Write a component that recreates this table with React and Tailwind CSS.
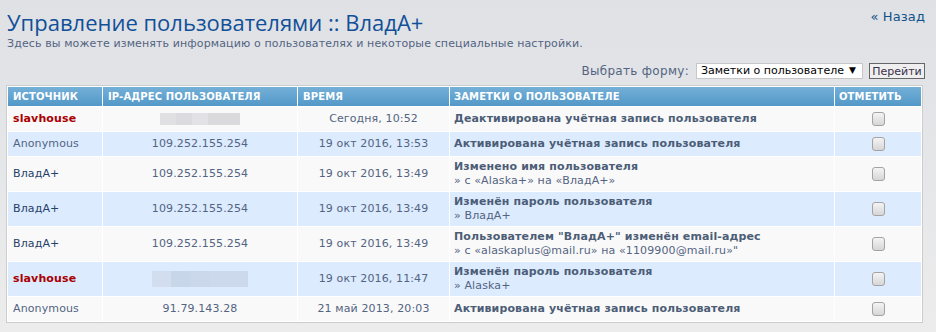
import React from "react";

const rows = [
  { src: "slavhouse", kind: "red", ip: null, blur: "row1", time: "Сегодня, 10:52", note: "Деактивирована учётная запись пользователя", alt: false },
  { src: "Anonymous", kind: "anon", ip: "109.252.155.254", time: "19 окт 2016, 13:53", note: "Активирована учётная запись пользователя", alt: true },
  { src: "ВладА+", kind: "user", ip: "109.252.155.254", time: "19 окт 2016, 13:49", note: "Изменено имя пользователя", sub: "» с «Alaska+» на «ВладА+»", alt: false },
  { src: "ВладА+", kind: "user", ip: "109.252.155.254", time: "19 окт 2016, 13:49", note: "Изменён пароль пользователя", sub: "» ВладА+", alt: true },
  { src: "ВладА+", kind: "user", ip: "109.252.155.254", time: "19 окт 2016, 13:49", note: "Пользователем \"ВладА+\" изменён email-адрес", sub: "» с «alaskaplus@mail.ru» на «1109900@mail.ru»\"", alt: false },
  { src: "slavhouse", kind: "red", ip: null, blur: "row6", time: "19 окт 2016, 11:47", note: "Изменён пароль пользователя", sub: "» Alaska+", alt: true },
  { src: "Anonymous", kind: "anon", ip: "91.79.143.28", time: "21 май 2013, 20:03", note: "Активирована учётная запись пользователя", alt: false },
];

function Checkbox() {
  return (
    <span className="inline-block h-[14px] w-[13px] rounded-[3px] border border-[#a3a3a3] bg-gradient-to-b from-[#f4f4f4] to-[#d6d6d6] align-middle" />
  );
}

function Source({ row }) {
  if (row.kind === "red") return <span className="font-bold text-[#aa0000]">{row.src}</span>;
  if (row.kind === "user") return <span className="text-[#26416a]">{row.src}</span>;
  return <span className="text-[#536482]">{row.src}</span>;
}

function Blur({ which }) {
  if (which === "row1") {
    return (
      <span className="inline-flex h-[12px] w-[80px] align-middle">
        <span className="flex-1 bg-[#e0e0e2]" />
        <span className="flex-1 bg-[#dadadf]" />
        <span className="flex-1 bg-[#e2e1e5]" />
        <span className="flex-[2] bg-[#dadadd]" />
      </span>
    );
  }
  return (
    <span className="inline-flex h-[16px] w-[96px] align-middle">
      <span className="flex-1 bg-[#d2def0]" />
      <span className="flex-1 bg-[#c8d6ea]" />
      <span className="flex-1 bg-[#cbd8ec]" />
      <span className="flex-[2] bg-[#ccd9ec]" />
    </span>
  );
}

export default function App() {
  return (
    <div className="min-h-[332px] w-full bg-gradient-to-b from-[#dfe1e5] to-[#ececec] px-[6px] pt-[8px] text-[11px] tracking-[0.12px] text-[#536482] [font-family:'DejaVu_Sans',Verdana,sans-serif]">
      <div className="flex items-start justify-between">
        <h1 className="pl-[1px] text-[22px] leading-[28px] tracking-normal text-[#115098] [font-family:'Open_Sans',sans-serif]">
          Управление пользователями :: ВладА+
        </h1>
        <a className="mr-[5px] mt-[1px] text-[13px] leading-[16px] text-[#105289]">« Назад</a>
      </div>
      <p className="pl-[1px] leading-[15px]">
        Здесь вы можете изменять информацию о пользователях и некоторые специальные настройки.
      </p>

      <div className="mt-[11px] flex items-center justify-end gap-[6px] pr-[5px]">
        <span className="mr-[1px] text-[12px] tracking-[0.3px]">Выбрать форму:</span>
        <div className="flex h-[16px] w-[167px] items-center justify-between border border-[#c7c7c7] bg-white pl-[4px] pr-[6px] text-[11px] tracking-normal text-black">
          <span>Заметки о пользователе</span>
          <span className="text-[9px]">▼</span>
        </div>
        <button className="h-[16px] w-[56px] border border-[#666] bg-[#efefef] text-[11px] leading-[13px] tracking-normal text-[#3a2f4a]">
          Перейти
        </button>
      </div>

      <div className="mt-[5px] w-[917px] border border-[#cccccc] bg-white">
        <table className="w-full table-fixed border-separate border-spacing-[1px] bg-white">
          <thead>
            <tr className="h-[19px] bg-gradient-to-b from-[#74b0d8] to-[#5298c8] text-left text-[10px] font-bold uppercase leading-[12px] text-white">
              <th className="w-[94px] px-[5px]">Источник</th>
              <th className="w-[194px] px-[5px]">IP-адрес пользователя</th>
              <th className="w-[151px] px-[5px]">Время</th>
              <th className="w-[384px] px-[4px]">Заметки о пользователе</th>
              <th className="w-[86px] px-[4px]">Отметить</th>
            </tr>
          </thead>
          <tbody>
            {rows.map((row, i) => (
              <tr key={i} className={(row.sub ? "h-[34px] " : "h-[24px] ") + (row.alt ? "bg-[#dcebfe]" : "bg-[#f9f9f9]")}>
                <td className="px-[5px] align-middle leading-[14px]">
                  <Source row={row} />
                </td>
                <td className="px-[4px] text-center align-middle leading-[14px]">
                  {row.ip ? row.ip : <Blur which={row.blur} />}
                </td>
                <td className="px-[4px] text-center align-middle leading-[14px]">{row.time}</td>
                <td className="px-[4px] align-middle leading-[14px]">
                  <div className="font-bold text-[#4c5d77]">{row.note}</div>
                  {row.sub && <div>{row.sub}</div>}
                </td>
                <td className="px-[4px] text-center align-middle">
                  <Checkbox />
                </td>
              </tr>
            ))}
          </tbody>
        </table>
      </div>
    </div>
  );
}
